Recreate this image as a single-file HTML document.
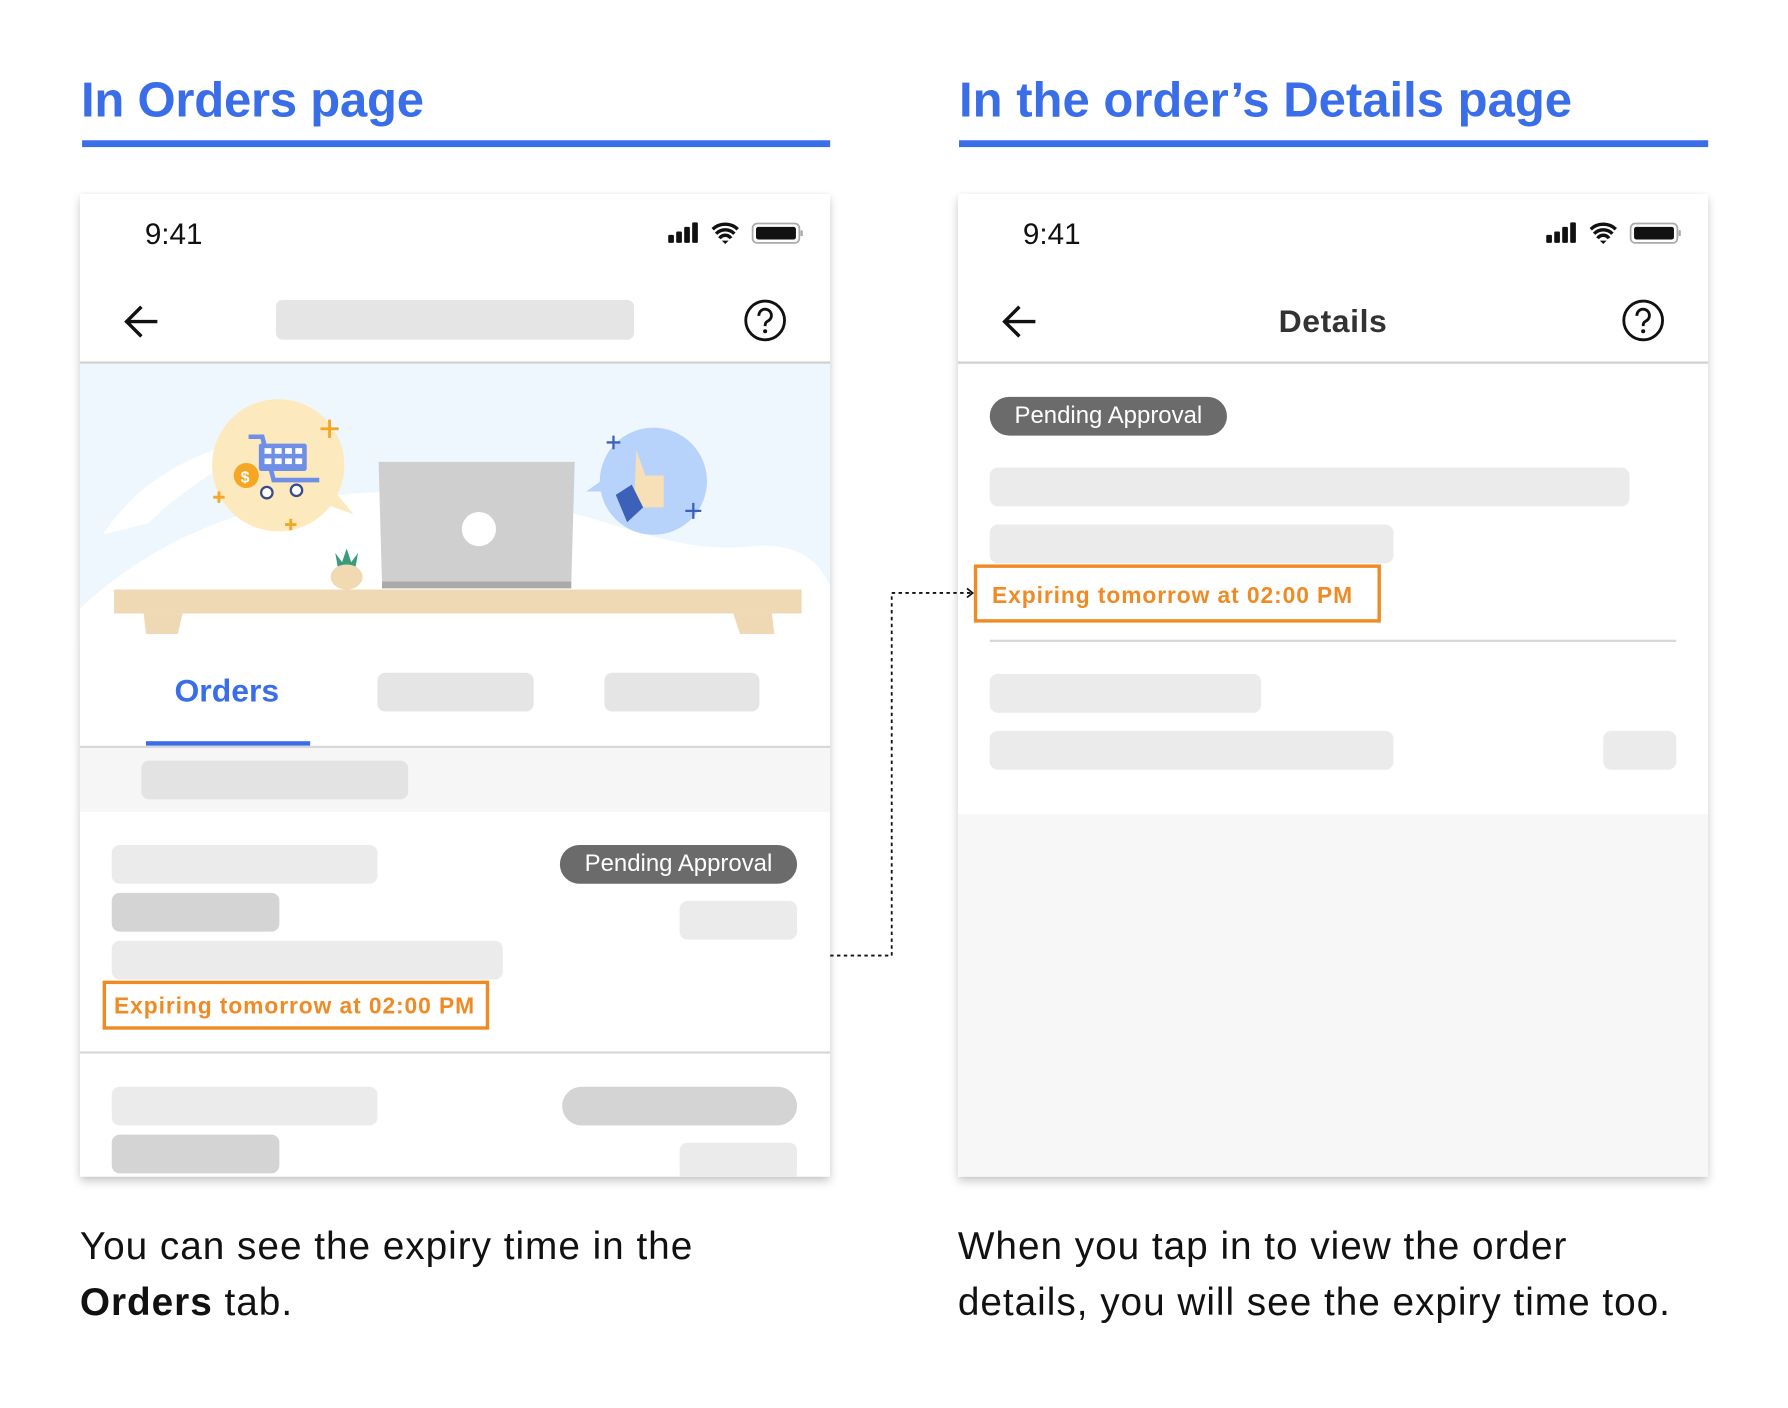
<!DOCTYPE html>
<html><head><meta charset="utf-8"><style>
html,body{margin:0;padding:0;background:#fff;width:1788px;height:1408px;overflow:hidden}
#w{position:absolute;left:0;top:0;width:1568px;height:1235px;transform:scale(1.1403);transform-origin:0 0;font-family:"Liberation Sans",sans-serif}
.a{position:absolute}
.h{font-weight:bold;color:#3a6ee8;font-size:43px;letter-spacing:-0.2px}
.ln{height:6px;background:#3a6ee8}
.ph{background:#fff;box-shadow:0 4px 8px rgba(0,0,0,.22),0 0 3px rgba(0,0,0,.08);overflow:hidden}
.g{background:#ebebeb;border-radius:7px}
.d{background:#d4d4d4;border-radius:7px}
.pill{background:#6b6b6b;color:#fff;border-radius:18px;font-size:21px;text-align:center;line-height:34px}
.ob{border:3px solid #f08a24;color:#f08a24;font-weight:bold;font-size:20px;box-sizing:border-box;letter-spacing:0.8px;white-space:nowrap}
.cap{font-size:34px;color:#111;line-height:49px;letter-spacing:0.85px}
.t{font-size:26px;color:#111}
</style></head><body><div id="w">
<div class="a h" style="left:71px;top:64px">In Orders page</div>
<div class="a ln" style="left:72px;top:123px;width:656px"></div>
<div class="a h" style="left:841px;top:64px;letter-spacing:0px">In the order’s Details page</div>
<div class="a ln" style="left:841px;top:123px;width:657px"></div>

<!-- left phone -->
<div class="a ph" style="left:70px;top:170px;width:658px;height:862px">
 <div class="a t" style="left:57px;top:20px">9:41</div>
 <svg class="a" style="left:514px;top:24px" width="122" height="24" viewBox="0 0 122 24">
  <rect x="2" y="12" width="5" height="7" rx="1" fill="#111"/><rect x="9" y="9" width="5" height="10" rx="1" fill="#111"/><rect x="16" y="5" width="5" height="14" rx="1" fill="#111"/><rect x="23" y="1" width="5" height="18" rx="1" fill="#111"/>
  <path d="M41 7a16 16 0 0 1 22 0M44 11a11 11 0 0 1 16 0M47 15a6 6 0 0 1 10 0" stroke="#111" stroke-width="3" fill="none"/><path d="M49 17l3 3 3-3z" fill="#111"/>
  <rect x="76" y="2" width="41" height="17" rx="4" fill="none" stroke="#aaa" stroke-width="1.5"/><rect x="79" y="5" width="35" height="11" rx="2" fill="#111"/><rect x="118" y="8" width="2" height="5" fill="#aaa"/>
 </svg>
 <svg class="a" style="left:38px;top:95px" width="34" height="34" viewBox="0 0 34 34"><path d="M30 17H4M16 4L3 17l13 13" stroke="#111" stroke-width="3" fill="none"/></svg>
 <div class="a" style="left:172px;top:93px;width:314px;height:35px;background:#e5e5e5;border-radius:6px"></div>
 <svg class="a" style="left:582px;top:92px" width="38" height="38" viewBox="0 0 38 38"><circle cx="19" cy="19" r="17" stroke="#111" stroke-width="2.5" fill="none"/><path d="M13.5 15a5.5 5.5 0 1 1 8 4.5c-2 1-2.5 2-2.5 4.5" stroke="#111" stroke-width="2.5" fill="none"/><circle cx="19" cy="28.5" r="1.8" fill="#111"/></svg>
 <div class="a" style="left:0;top:147px;width:658px;height:2px;background:#d0d0d0"></div>
 <svg class="a" style="left:0;top:149px" width="658" height="245" viewBox="0 0 658 245">
  <rect width="658" height="245" fill="#eef7fd"/>
  <path d="M0 215C80 140 180 110 300 112C450 116 500 170 590 160C630 156 650 175 658 195V245H0z" fill="#fff"/>
  <path d="M20 150C60 90 120 70 180 60C130 85 90 110 60 140z" fill="#fff"/>
  <circle cx="174" cy="89" r="58" fill="#fde9be"/><path d="M222 110l18 22-28-10z" fill="#fde9be"/>
  <path d="M148 64h12l10 38h40" stroke="#6f8fe6" stroke-width="4" fill="none"/><rect x="157" y="70" width="42" height="24" rx="2" fill="#6f8fe6"/>
  <g fill="#fff"><rect x="162" y="74" width="6" height="5"/><rect x="171" y="74" width="6" height="5"/><rect x="180" y="74" width="6" height="5"/><rect x="189" y="74" width="6" height="5"/><rect x="162" y="83" width="6" height="5"/><rect x="171" y="83" width="6" height="5"/><rect x="180" y="83" width="6" height="5"/><rect x="189" y="83" width="6" height="5"/></g>
  <circle cx="164" cy="113" r="5" fill="#fff" stroke="#3a4a8a" stroke-width="2"/><circle cx="190" cy="111" r="5" fill="#fff" stroke="#3a4a8a" stroke-width="2"/>
  <circle cx="146" cy="98" r="11" fill="#f5a623"/><text x="141" y="104" font-size="14" fill="#fff" font-weight="bold">$</text>
  <path d="M219 49v16M211 57h16M122 112v10M117 117h10M185 136v10M180 141h10" stroke="#f5a623" stroke-width="2.5"/>
  <circle cx="503" cy="103" r="47" fill="#b7d3fb"/><path d="M462 112l-18 0 20-14z" fill="#b7d3fb"/>
  <path d="M488 76l8 22h16v28h-26z" fill="#f7dfb8"/><path d="M470 115l14-9 10 20-14 13z" fill="#3b62b8"/>
  <path d="M468 63v12M462 69h12M538 122v14M531 129h14" stroke="#3b62b8" stroke-width="2"/>
  <path d="M262 86h172l-3 106H265z" fill="#cfcfcf"/><rect x="265" y="191" width="166" height="6" fill="#aaa"/>
  <circle cx="350" cy="145" r="15" fill="#fff"/>
  <path d="M224 166l6 8 4-12 4 12 6-8-4 22h-12z" fill="#3a9c7a"/><ellipse cx="234" cy="187" rx="14" ry="11" fill="#f1d9b1"/>
  <rect x="30" y="198" width="603" height="21" fill="#efd9b5"/><path d="M56 219h34l-4 18h-28zM573 219h34l2 18h-30z" fill="#efd9b5"/>
 </svg>
 <div class="a" style="left:83px;top:420px;font-size:28px;font-weight:bold;color:#3a6ee8">Orders</div>
 <div class="a" style="left:58px;top:480px;width:144px;height:4px;background:#3a6ee8"></div>
 <div class="a" style="left:261px;top:420px;width:137px;height:34px;background:#e5e5e5;border-radius:7px"></div>
 <div class="a" style="left:460px;top:420px;width:136px;height:34px;background:#e5e5e5;border-radius:7px"></div>
 <div class="a" style="left:0;top:484px;width:658px;height:2px;background:#d8d8d8"></div>
 <div class="a" style="left:0;top:486px;width:658px;height:56px;background:#f6f6f6"></div>
 <div class="a" style="left:54px;top:497px;width:234px;height:34px;background:#e3e3e3;border-radius:7px"></div>
 <div class="a g" style="left:28px;top:571px;width:233px;height:34px"></div>
 <div class="a d" style="left:28px;top:613px;width:147px;height:34px"></div>
 <div class="a g" style="left:28px;top:655px;width:343px;height:34px"></div>
 <div class="a pill" style="left:421px;top:571px;width:208px">Pending Approval</div>
 <div class="a g" style="left:526px;top:620px;width:103px;height:34px"></div>
 <div class="a ob" style="left:20px;top:690px;width:339px;height:43px;padding:9px 0 0 7px">Expiring tomorrow at 02:00 PM</div>
 <div class="a" style="left:0;top:752px;width:658px;height:2px;background:#d8d8d8"></div>
 <div class="a g" style="left:28px;top:783px;width:233px;height:34px"></div>
 <div class="a d" style="left:423px;top:783px;width:206px;height:34px;border-radius:17px"></div>
 <div class="a d" style="left:28px;top:825px;width:147px;height:34px"></div>
 <div class="a g" style="left:526px;top:832px;width:103px;height:34px"></div>
</div>

<!-- right phone -->
<div class="a ph" style="left:840px;top:170px;width:658px;height:862px">
 <div class="a t" style="left:57px;top:20px">9:41</div>
 <svg class="a" style="left:514px;top:24px" width="122" height="24" viewBox="0 0 122 24">
  <rect x="2" y="12" width="5" height="7" rx="1" fill="#111"/><rect x="9" y="9" width="5" height="10" rx="1" fill="#111"/><rect x="16" y="5" width="5" height="14" rx="1" fill="#111"/><rect x="23" y="1" width="5" height="18" rx="1" fill="#111"/>
  <path d="M41 7a16 16 0 0 1 22 0M44 11a11 11 0 0 1 16 0M47 15a6 6 0 0 1 10 0" stroke="#111" stroke-width="3" fill="none"/><path d="M49 17l3 3 3-3z" fill="#111"/>
  <rect x="76" y="2" width="41" height="17" rx="4" fill="none" stroke="#aaa" stroke-width="1.5"/><rect x="79" y="5" width="35" height="11" rx="2" fill="#111"/><rect x="118" y="8" width="2" height="5" fill="#aaa"/>
 </svg>
 <svg class="a" style="left:38px;top:95px" width="34" height="34" viewBox="0 0 34 34"><path d="M30 17H4M16 4L3 17l13 13" stroke="#111" stroke-width="3" fill="none"/></svg>
 <div class="a" style="left:0;top:96px;width:658px;text-align:center;font-size:28px;color:#333;font-weight:bold;letter-spacing:0.5px">Details</div>
 <svg class="a" style="left:582px;top:92px" width="38" height="38" viewBox="0 0 38 38"><circle cx="19" cy="19" r="17" stroke="#111" stroke-width="2.5" fill="none"/><path d="M13.5 15a5.5 5.5 0 1 1 8 4.5c-2 1-2.5 2-2.5 4.5" stroke="#111" stroke-width="2.5" fill="none"/><circle cx="19" cy="28.5" r="1.8" fill="#111"/></svg>
 <div class="a" style="left:0;top:147px;width:658px;height:2px;background:#d0d0d0"></div>
 <div class="a pill" style="left:28px;top:178px;width:208px">Pending Approval</div>
 <div class="a g" style="left:28px;top:240px;width:561px;height:34px"></div>
 <div class="a g" style="left:28px;top:290px;width:354px;height:34px"></div>
 <div class="a ob" style="left:14px;top:325px;width:357px;height:51px;padding:14px 0 0 13px">Expiring tomorrow at 02:00 PM</div>
 <div class="a" style="left:28px;top:391px;width:602px;height:2px;background:#d8d8d8"></div>
 <div class="a g" style="left:28px;top:421px;width:238px;height:34px"></div>
 <div class="a g" style="left:28px;top:471px;width:354px;height:34px"></div>
 <div class="a g" style="left:566px;top:471px;width:64px;height:34px"></div>
 <div class="a" style="left:0;top:544px;width:658px;height:318px;background:#f7f7f7"></div>
</div>

<svg class="a" style="left:728px;top:510px" width="130" height="335" viewBox="0 0 130 335"><path d="M0 328H54V10H124" stroke="#111" stroke-width="1.6" stroke-dasharray="3 3" fill="none"/><path d="M120 6l5 4-5 4" stroke="#111" stroke-width="1.5" fill="none"/></svg>

<div class="a cap" style="left:70px;top:1069px">You can see the expiry time in the<br><b>Orders</b> tab.</div>
<div class="a cap" style="left:840px;top:1069px">When you tap in to view the order<br>details, you will see the expiry time too.</div>
</div></body></html>
